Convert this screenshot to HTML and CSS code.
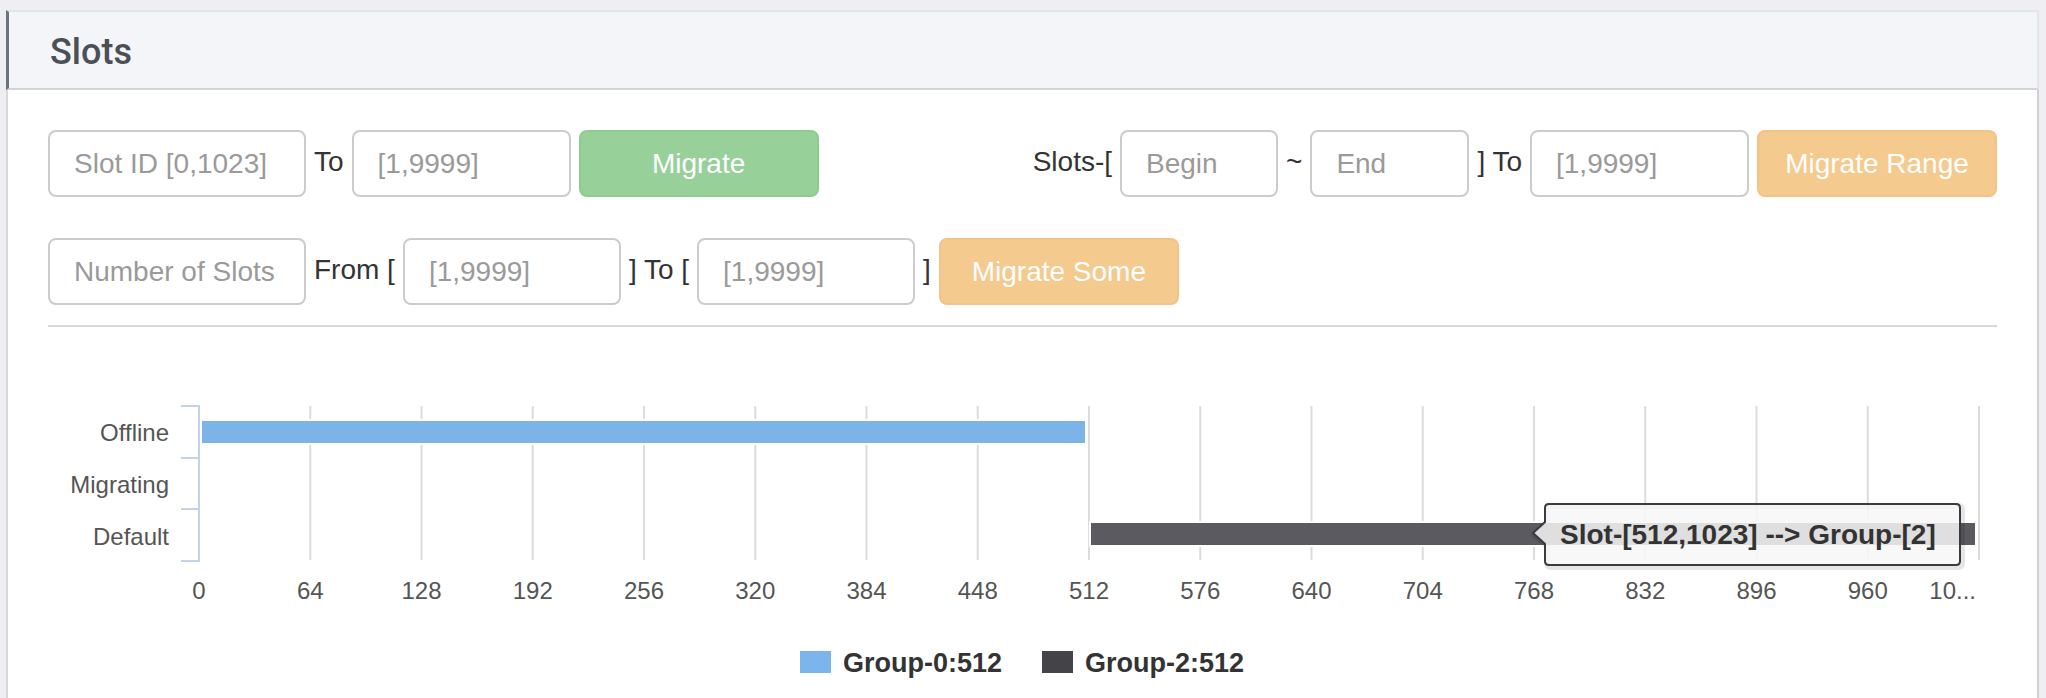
FILE: index.html
```html
<!DOCTYPE html>
<html lang="en">
<head>
<meta charset="utf-8">
<title>Slots</title>
<link rel="stylesheet" href="styles.css">
</head>
<body>
<div class="panel">
  <div class="panel-heading"><h3 class="panel-title">Slots</h3></div>
  <div class="panel-body">
    <div class="form-row">
      <div class="group">
        <input class="form-control w258" placeholder="Slot ID [0,1023]">
        <span class="label">To</span>
        <input class="form-control w219" placeholder="[1,9999]">
        <button class="btn btn-success">Migrate</button>
      </div>
      <div class="group">
        <span class="label">Slots-[</span>
        <input class="form-control w158" placeholder="Begin">
        <span class="label">~</span>
        <input class="form-control w159" placeholder="End">
        <span class="label">] To</span>
        <input class="form-control w219" placeholder="[1,9999]">
        <button class="btn btn-warning">Migrate Range</button>
      </div>
    </div>
    <div class="form-row">
      <div class="group">
        <input class="form-control w258" placeholder="Number of Slots">
        <span class="label">From [</span>
        <input class="form-control w218" placeholder="[1,9999]">
        <span class="label">] To [</span>
        <input class="form-control w218" placeholder="[1,9999]">
        <span class="label">]</span>
        <button class="btn btn-warning">Migrate Some</button>
      </div>
    </div>
    <hr class="divider">
    <svg class="chart" width="1949" height="371" viewBox="0 0 1949 371">
      <g class="grid">
        <line x1="262.25" y1="79" x2="262.25" y2="233"/>
        <line x1="373.5" y1="79" x2="373.5" y2="233"/>
        <line x1="484.75" y1="79" x2="484.75" y2="233"/>
        <line x1="596" y1="79" x2="596" y2="233"/>
        <line x1="707.25" y1="79" x2="707.25" y2="233"/>
        <line x1="818.5" y1="79" x2="818.5" y2="233"/>
        <line x1="929.75" y1="79" x2="929.75" y2="233"/>
        <line x1="1041" y1="79" x2="1041" y2="233"/>
        <line x1="1152.25" y1="79" x2="1152.25" y2="233"/>
        <line x1="1263.5" y1="79" x2="1263.5" y2="233"/>
        <line x1="1374.75" y1="79" x2="1374.75" y2="233"/>
        <line x1="1486" y1="79" x2="1486" y2="233"/>
        <line x1="1597.25" y1="79" x2="1597.25" y2="233"/>
        <line x1="1708.5" y1="79" x2="1708.5" y2="233"/>
        <line x1="1819.75" y1="79" x2="1819.75" y2="233"/>
        <line x1="1931" y1="79" x2="1931" y2="233"/>
      </g>
      <g class="axis">
        <line x1="151" y1="78" x2="151" y2="235"/>
        <line x1="133" y1="79" x2="151" y2="79"/>
        <line x1="133" y1="131" x2="151" y2="131"/>
        <line x1="133" y1="182" x2="151" y2="182"/>
        <line x1="133" y1="234" x2="151" y2="234"/>
      </g>
      <g class="ylabels">
        <text x="121" y="105">Offline</text>
        <text x="121" y="157">Migrating</text>
        <text x="121" y="209">Default</text>
      </g>
      <rect class="bar-blue" x="153" y="93" width="885" height="24"/>
      <rect class="bar-dark" x="1042" y="195" width="886" height="24"/>
      <g class="xlabels">
        <text x="151" y="263">0</text>
        <text x="262.25" y="263">64</text>
        <text x="373.5" y="263">128</text>
        <text x="484.75" y="263">192</text>
        <text x="596" y="263">256</text>
        <text x="707.25" y="263">320</text>
        <text x="818.5" y="263">384</text>
        <text x="929.75" y="263">448</text>
        <text x="1041" y="263">512</text>
        <text x="1152.25" y="263">576</text>
        <text x="1263.5" y="263">640</text>
        <text x="1374.75" y="263">704</text>
        <text x="1486" y="263">768</text>
        <text x="1597.25" y="263">832</text>
        <text x="1708.5" y="263">896</text>
        <text x="1819.75" y="263">960</text>
        <text class="last" x="1928" y="263">10...</text>
      </g>
      <g class="tooltip">
        <path class="tt-shadow" d="M1501 177 H1908 Q1912 177 1912 181 V234 Q1912 238 1908 238 H1501 Q1497 238 1497 234 V217 L1485 206 L1497 195 V181 Q1497 177 1501 177 Z"/>
        <path class="tt-box" d="M1501 177 H1908 Q1912 177 1912 181 V234 Q1912 238 1908 238 H1501 Q1497 238 1497 234 V217 L1485 206 L1497 195 V181 Q1497 177 1501 177 Z"/>
        <text class="tt-text" x="1512" y="217">Slot-[512,1023] --&gt; Group-[2]</text>
      </g>
      <g class="legend">
        <rect class="lg-blue" x="752" y="324" width="31" height="22"/>
        <text x="795" y="345">Group-0:512</text>
        <rect class="lg-dark" x="994" y="324" width="31" height="22"/>
        <text x="1037" y="345">Group-2:512</text>
      </g>
    </svg>
  </div>
</div>
</body>
</html>
```
FILE: styles.css
```css
* {
  box-sizing: border-box;
}

html,
body {
  margin: 0;
  height: 698px;
  overflow: hidden;
}

body {
  background: #efeff3;
  font-family: "Liberation Sans", Arial, sans-serif;
  padding-top: 10px;
}

.panel {
  margin: 0 7px 0 6px;
}

.panel-heading {
  height: 80px;
  background: #f4f5f9;
  border-top: 2px solid #e2e6ea;
  border-right: 2px solid #e2e6ea;
  border-left: 3px solid #6c757e;
  border-bottom: 2px solid #d3d3d3;
  display: flex;
  align-items: center;
  padding-left: 41px;
  padding-top: 4px;
}

.panel-title {
  margin: 0;
  font-family: Roboto, "Liberation Sans", sans-serif;
  font-weight: 500;
  font-size: 36px;
  color: #4b5056;
}

.panel-body {
  background: #fff;
  border-left: 2px solid #d8d8d8;
  border-right: 2px solid #d0d0d0;
  padding: 40px 40px 0 40px;
  height: 620px;
}

.form-row {
  display: flex;
  align-items: center;
  justify-content: space-between;
  height: 67px;
}

.form-row + .form-row {
  margin-top: 41px;
}

.group {
  display: flex;
  align-items: center;
  gap: 8px;
}

.form-control {
  height: 67px;
  border: 2px solid #cccccc;
  border-radius: 8px;
  padding: 0 24px;
  font-family: "Liberation Sans", Arial, sans-serif;
  font-size: 28px;
  color: #555;
  background: #fff;
  outline: none;
}

.form-control::placeholder {
  color: #9a9a9a;
}

.w258 { width: 258px; }
.w219 { width: 219px; }
.w218 { width: 218px; }
.w158 { width: 158px; }
.w159 { width: 159px; }

.label {
  font-size: 28px;
  color: #333;
  margin-top: -4px;
}

.btn {
  width: 240px;
  height: 67px;
  border-radius: 8px;
  border: 2px solid;
  font-family: "Liberation Sans", Arial, sans-serif;
  font-size: 28px;
  color: #fff;
  padding: 0;
}

.btn-success {
  background: #98d09a;
  border-color: #8fcb91;
}

.btn-warning {
  background: #f5ca8f;
  border-color: #f3c285;
}

.divider {
  margin: 20px 0 0;
  border: 0;
  border-top: 2px solid #d8d8d8;
  height: 0;
}

.chart {
  display: block;
  overflow: visible;
  font-family: "Liberation Sans", Arial, sans-serif;
}

.grid line {
  stroke: #dcdcdc;
  stroke-width: 2;
}

.axis line {
  stroke: #c4d3e8;
  stroke-width: 2;
}

.ylabels text {
  font-size: 24px;
  fill: #555;
  text-anchor: end;
  dominant-baseline: central;
}

.xlabels text {
  font-size: 24px;
  fill: #555;
  text-anchor: middle;
  dominant-baseline: central;
}

.xlabels text.last {
  text-anchor: end;
}

.bar-blue {
  fill: #7db4e8;
  stroke: #fff;
  stroke-width: 2;
}

.bar-dark {
  fill: #5b5a60;
  stroke: #fff;
  stroke-width: 2;
}

.tt-shadow {
  fill: none;
  stroke: rgba(0, 0, 0, 0.1);
  stroke-width: 6;
  transform: translate(2px, 2px);
}

.tt-box {
  fill: rgba(247, 247, 247, 0.85);
  stroke: #3a3a3f;
  stroke-width: 2;
}

.tt-text {
  font-size: 28px;
  font-weight: 700;
  fill: #333;
}

.legend text {
  font-size: 27px;
  font-weight: 700;
  fill: #333;
}

.lg-blue {
  fill: #7cb5ec;
}

.lg-dark {
  fill: #434348;
}
```
